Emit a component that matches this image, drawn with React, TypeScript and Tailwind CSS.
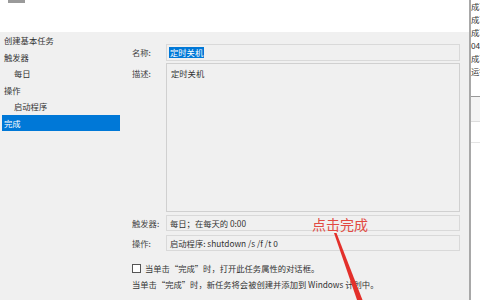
import React from 'react';

const cjk = { fontFamily: '"Noto Sans CJK SC", "Noto Sans", sans-serif' };

const navItems = [
  { label: '创建基本任务', indent: false },
  { label: '触发器', indent: false },
  { label: '每日', indent: true },
  { label: '操作', indent: false },
  { label: '启动程序', indent: true },
  { label: '完成', indent: false, active: true },
];

const stripLines = ['成功', '成功', '成功', '04', '成功', '运行'];

function Field({ children }: { children?: React.ReactNode }) {
  return (
    <div className="flex h-[16px] items-center border border-[#d9d9d9] bg-[#f0f0f0] px-[3px] text-[8.3px] text-[#333]">
      {children}
    </div>
  );
}

export default function App() {
  return (
    <div className="relative flex h-[300px] w-[480px] overflow-hidden bg-white text-[#333]" style={cjk}>
      {/* dialog */}
      <div className="flex w-[469px] shrink-0 flex-col">
        <div className="relative h-[32px] bg-white">
          <div className="absolute left-[8px] top-0 h-[3px] w-[17px] bg-[#9a9a9a]" />
        </div>
        <div className="flex flex-1 bg-[#f0f0f0]">
          {/* nav */}
          <div className="w-[120px] shrink-0 pl-[2px]">
            {navItems.map((item) => (
              <div
                key={item.label}
                className={`flex h-[16.5px] items-center text-[8.3px] ${item.indent ? 'pl-[12px]' : 'pl-[2px]'} ${
                  item.active ? 'bg-[#0078d7] text-white' : 'text-[#333]'
                }`}
              >
                {item.label}
              </div>
            ))}
          </div>

          {/* content */}
          <div className="flex flex-1 flex-col pl-[12px] pr-[9px] pt-[12px]">
            <div className="flex items-center">
              <div className="w-[34px] text-[8.3px] text-[#444]">名称:</div>
              <div className="flex h-[17px] flex-1 items-center border border-[#d9d9d9] bg-[#f0f0f0] px-[2px]">
                <span className="bg-[#0078d7] px-[1px] text-[8.3px] leading-[11px] text-white">定时关机</span>
              </div>
            </div>
            <div className="mt-[2px] flex">
              <div className="w-[34px] pt-[4px] text-[8.3px] text-[#444]">描述:</div>
              <div className="h-[149px] flex-1 border border-[#d0d0d0] bg-[#f0f0f0] px-[4px] pt-[3px] text-[8.3px] text-[#333]">
                定时关机
              </div>
            </div>
            <div className="mt-[3px] flex items-center">
              <div className="w-[34px] text-[8.3px] text-[#444]">触发器:</div>
              <div className="flex-1">
                <Field>每日；在每天的 0:00</Field>
              </div>
            </div>
            <div className="mt-[4px] flex items-center">
              <div className="w-[34px] text-[8.3px] text-[#444]">操作:</div>
              <div className="flex-1">
                <Field>启动程序: shutdown /s /f /t 0</Field>
              </div>
            </div>
            <div className="mt-[11px] flex items-center">
              <div className="h-[9px] w-[9px] border border-[#555] bg-white" />
              <span className="ml-[4px] text-[8.3px] text-[#333]">当单击“完成”时，打开此任务属性的对话框。</span>
            </div>
            <div className="mt-[4px] text-[8.3px] text-[#333]">
              当单击“完成”时，新任务将会被创建并添加到 Windows 计划中。
            </div>
          </div>
        </div>
      </div>

      {/* window behind */}
      <div className="flex min-w-0 flex-1 flex-col overflow-hidden border-l-2 border-[#a8a8a8] bg-white">
        <div className="overflow-hidden">
          {stripLines.map((t, i) => (
            <div key={i} className="h-[13px] whitespace-nowrap text-[8.3px] leading-[13px] text-[#333]">
              {t}
            </div>
          ))}
        </div>
        <div className="mt-[18px] h-[1px] bg-[#999]" />
        <div className="h-[24px] bg-[#f4f4f4]" />
        <div className="h-[1px] bg-[#ddd]" />
        <div className="mt-[20px] h-[1px] bg-[#e4e4e4]" />
      </div>

      {/* annotation */}
      <div className="absolute left-[312px] top-[216px] text-[14px] leading-[17px] text-[#e24a42]">点击完成</div>
      <svg className="absolute left-0 top-0" width="480" height="300" viewBox="0 0 480 300">
        <polygon points="334,233 336.5,233 362.5,300 357,300" fill="#e3302b" />
      </svg>
    </div>
  );
}
